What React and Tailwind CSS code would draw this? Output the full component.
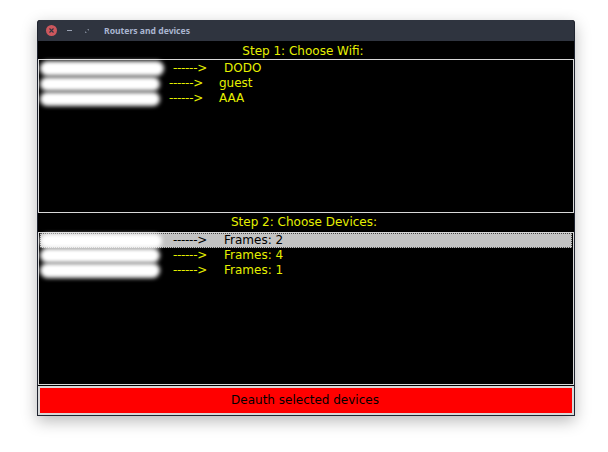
const font = { fontFamily: '"DejaVu Sans", sans-serif' };

function Row({ blob, arrowX, textX, arrow, text, selected, blobClass }) {
  return (
    <div className={`flex h-[15px] items-center text-[12px] leading-[15px] ${selected ? "bg-[#c3c3c3] text-black outline-1 -outline-offset-1 outline-dotted outline-[#444]" : "text-[#e6f000]"}`}>
      <div className={`shrink-0 rounded-full bg-white blur-[2px] ${blobClass}`} style={{ width: blob }} />
      <span className="shrink-0 whitespace-pre tracking-[-0.3px]" style={{ marginLeft: arrowX - blob - 40, width: textX - arrowX }}>{arrow}</span>
      <span className="whitespace-pre">{text}</span>
    </div>
  );
}

function ListBox({ rows, h, extra }) {
  return (
    <div className={`border border-[#d8d8d8] bg-black px-px ${h} ${extra}`}>
      {rows.map((r) => (
        <Row key={r.text} {...r} />
      ))}
    </div>
  );
}

export default function App() {
  const wifi = [
    { blob: 124, arrowX: 173, textX: 224, arrow: "------>", text: "DODO", blobClass: "h-[15px]" },
    { blob: 120, arrowX: 169, textX: 219, arrow: "------>", text: "guest", blobClass: "h-[14px]" },
    { blob: 120, arrowX: 169, textX: 219, arrow: "------>", text: "AAA", blobClass: "h-[14px]" },
  ];
  const devices = [
    { blob: 122, arrowX: 173, textX: 224, arrow: "------>", text: "Frames: 2", selected: true, blobClass: "h-[14px]" },
    { blob: 120, arrowX: 173, textX: 224, arrow: "------>", text: "Frames: 4", blobClass: "h-[15px]" },
    { blob: 120, arrowX: 173, textX: 224, arrow: "------>", text: "Frames: 1", blobClass: "h-[15px]" },
  ];
  return (
    <div className="h-[452px] w-[608px] bg-white pl-[37px] pt-[20px]" style={font}>
      <div className="w-[538px] overflow-hidden rounded-t-[3px] border-x border-b border-[#1f2430] bg-black shadow-[0_5px_16px_rgba(0,0,0,0.28)]">
        <div className="flex h-[21px] items-center bg-[#2f343f] pl-[8px]">
          <div className="flex h-[11px] w-[11px] items-center justify-center rounded-full bg-[#cc575d]">
            <svg width="7" height="7" viewBox="0 0 7 7"><path d="M1.5 1.5l4 4M5.5 1.5l-4 4" stroke="#2f343f" strokeWidth="1.1" /></svg>
          </div>
          <div className="ml-[10px] h-px w-[5px] bg-[#9aa2b3]" />
          <svg className="ml-[12px]" width="6" height="6" viewBox="0 0 6 6"><path d="M1 5h2L1 3zM5 1H3l2 2z" fill="#7c8494" /></svg>
          <span className="ml-[14px] pt-[2px] text-[8.6px] font-bold text-[#a9b4cf]" style={{ fontFamily: '"Noto Sans", sans-serif' }}>Routers and devices</span>
        </div>
        <div className="flex h-[18px] items-center justify-center pr-[6px] pt-[2px] text-[12px] text-[#e6f000]">Step 1: Choose Wifi:</div>
        <ListBox rows={wifi} h="h-[154px]" extra="pt-px" />
        <div className="flex h-[19px] items-center justify-center pb-[2px] pr-[4px] text-[12px] text-[#e6f000]">Step 2: Choose Devices:</div>
        <ListBox rows={devices} h="h-[153px]" extra="" />
        <div className="mt-px flex h-[29px] items-center justify-center border-2 border-[#d8d8d8] bg-[#ff0000] pb-[2px] pr-[2px] text-[12px] text-black">Deauth selected devices</div>
      </div>
    </div>
  );
}
